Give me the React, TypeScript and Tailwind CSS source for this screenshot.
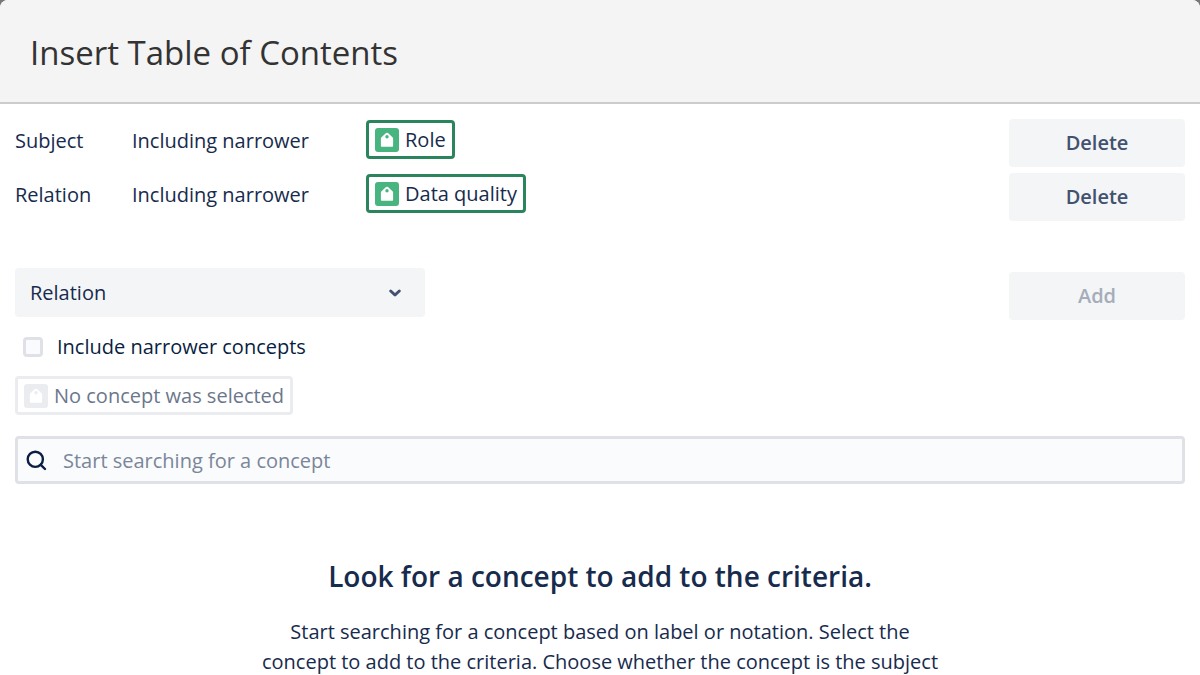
import * as React from "react";
import { useState } from "react";

interface Criterion {
    id: number;
    type: string;
    scope: string;
    concept: string;
}

const initialCriteria: Criterion[] = [
    { id: 1, type: "Subject", scope: "Including narrower", concept: "Role" },
    { id: 2, type: "Relation", scope: "Including narrower", concept: "Data quality" },
];

const ConceptIcon: React.FC<{ className: string }> = ({ className }) => (
    <svg viewBox="0 0 24 24" className={`size-6 shrink-0 ${className}`} aria-hidden="true">
        <rect width="24" height="24" rx="3" fill="currentColor" />
        <path
            fill="#fff"
            fillRule="evenodd"
            d="M11 5.1a1.5 1.5 0 0 1 2 0l4.5 4.1c.4.4.6.8.6 1.4v7.2c0 .6-.4 1-1 1H6.9c-.6 0-1-.4-1-1v-7.2c0-.6.2-1 .6-1.4zM12 7.1a1.7 1.7 0 1 0 0 3.4 1.7 1.7 0 0 0 0-3.4z"
        />
    </svg>
);

const ConceptChip: React.FC<{ label: string }> = ({ label }) => (
    <span className="inline-flex h-[39px] items-center gap-1.5 rounded border-3 border-[#2a845c] bg-white px-1.5 whitespace-nowrap">
        <ConceptIcon className="text-[#48b581]" />
        {label}
    </span>
);

const App: React.FC = () => {
    const [criteria, setCriteria] = useState(initialCriteria);
    const [type, setType] = useState("Relation");
    const [narrower, setNarrower] = useState(false);
    const [query, setQuery] = useState("");

    return (
        <div className="h-screen overflow-hidden bg-[#777777] font-['Open_Sans','Noto_Sans',sans-serif] text-[20px] leading-[30px] text-[#172b4d]">
            <div className="min-h-full overflow-hidden rounded-t-lg bg-white">
                <header className="border-b-2 border-[#cccccc] bg-[#f4f4f4] px-[30px] pt-[29px] pb-[25px]">
                    <h1 className="text-[33px] leading-[48px] text-[#333333]">Insert Table of Contents</h1>
                </header>

                <main className="px-[15px] pt-[15px]">
                    <table className="w-full table-fixed border-collapse text-left" aria-label="Criteria">
                        <tbody>
                            {criteria.map((item) => (
                                <tr key={item.id} className="align-top">
                                    <th scope="row" className="w-[117px] pt-[7px] font-normal">{item.type}</th>
                                    <td className="w-[234px] pt-[7px]">{item.scope}</td>
                                    <td className="pt-px">
                                        <ConceptChip label={item.concept} />
                                    </td>
                                    <td className="w-44 pb-1.5">
                                        <button
                                            type="button"
                                            onClick={() => setCriteria(criteria.filter((c) => c.id !== item.id))}
                                            className="block h-12 w-full rounded bg-[#f4f5f7] font-semibold text-[#42526e]"
                                        >
                                            Delete
                                        </button>
                                    </td>
                                </tr>
                            ))}
                        </tbody>
                    </table>

                    <form className="pt-[41px]" onSubmit={(e) => e.preventDefault()}>
                        <div className="flex items-start justify-between">
                            <div className="relative w-[410px]">
                                <select
                                    aria-label="Criterion type"
                                    value={type}
                                    onChange={(e) => setType(e.target.value)}
                                    className="block h-[49px] w-full appearance-none rounded bg-[#f4f5f7] px-[15px]"
                                >
                                    <option>Relation</option>
                                    <option>Subject</option>
                                </select>
                                <svg
                                    viewBox="0 0 24 24"
                                    className="pointer-events-none absolute top-3 right-[18px] size-6 text-[#42526e]"
                                    aria-hidden="true"
                                >
                                    <path
                                        d="M7.7 11l4.3 4 4.3-4"
                                        fill="none"
                                        stroke="currentColor"
                                        strokeWidth="3"
                                        strokeLinecap="round"
                                        strokeLinejoin="round"
                                    />
                                </svg>
                            </div>
                            <button
                                type="submit"
                                disabled
                                className="mt-1 h-12 w-44 rounded bg-[#f4f5f7] font-semibold text-[#a5adba]"
                            >
                                Add
                            </button>
                        </div>

                        <label className="mt-3 flex w-fit items-center gap-3.5 pl-2 text-[#091e42]">
                            <input
                                type="checkbox"
                                checked={narrower}
                                onChange={(e) => setNarrower(e.target.checked)}
                                className="size-5 appearance-none rounded border-3 border-[#dfe1e6] bg-[#fafbfc] checked:bg-[#42526e]"
                            />
                            Include narrower concepts
                        </label>

                        <div className="mt-3.5 flex h-[39px] w-fit items-center gap-1.5 rounded border-3 border-[#ebecf0] px-1.5 text-[#6b778c]">
                            <ConceptIcon className="text-[#ebecf0]" />
                            No concept was selected
                        </div>

                        <label className="mt-[21px] flex h-12 items-center gap-[15px] rounded border-3 border-[#dfe1e6] bg-[#fafbfc] pt-0.5 pl-1.5">
                            <svg viewBox="0 0 24 24" className="size-6 shrink-0 text-[#091e42]" aria-hidden="true">
                                <g fill="none" stroke="currentColor" strokeWidth="2.4" strokeLinecap="round">
                                    <circle cx="11.3" cy="10.3" r="7.6" />
                                    <path d="M16.8 15.8l4.2 4.2" />
                                </g>
                            </svg>
                            <input
                                type="text"
                                aria-label="Search for a concept"
                                value={query}
                                onChange={(e) => setQuery(e.target.value)}
                                placeholder="Start searching for a concept"
                                className="min-w-0 flex-1 bg-transparent outline-none placeholder:text-[#7a869a]"
                            />
                        </label>
                    </form>

                    <section className="mx-auto max-w-[690px] pt-[72px] text-center">
                        <h2 className="text-[28px] leading-10 font-semibold">Look for a concept to add to the criteria.</h2>
                        <p className="pt-[21px]">
                            Start searching for a concept based on label or notation. Select the concept to add to the
                            criteria. Choose whether the concept is the subject
                        </p>
                    </section>
                </main>
            </div>
        </div>
    );
};

export default App;
